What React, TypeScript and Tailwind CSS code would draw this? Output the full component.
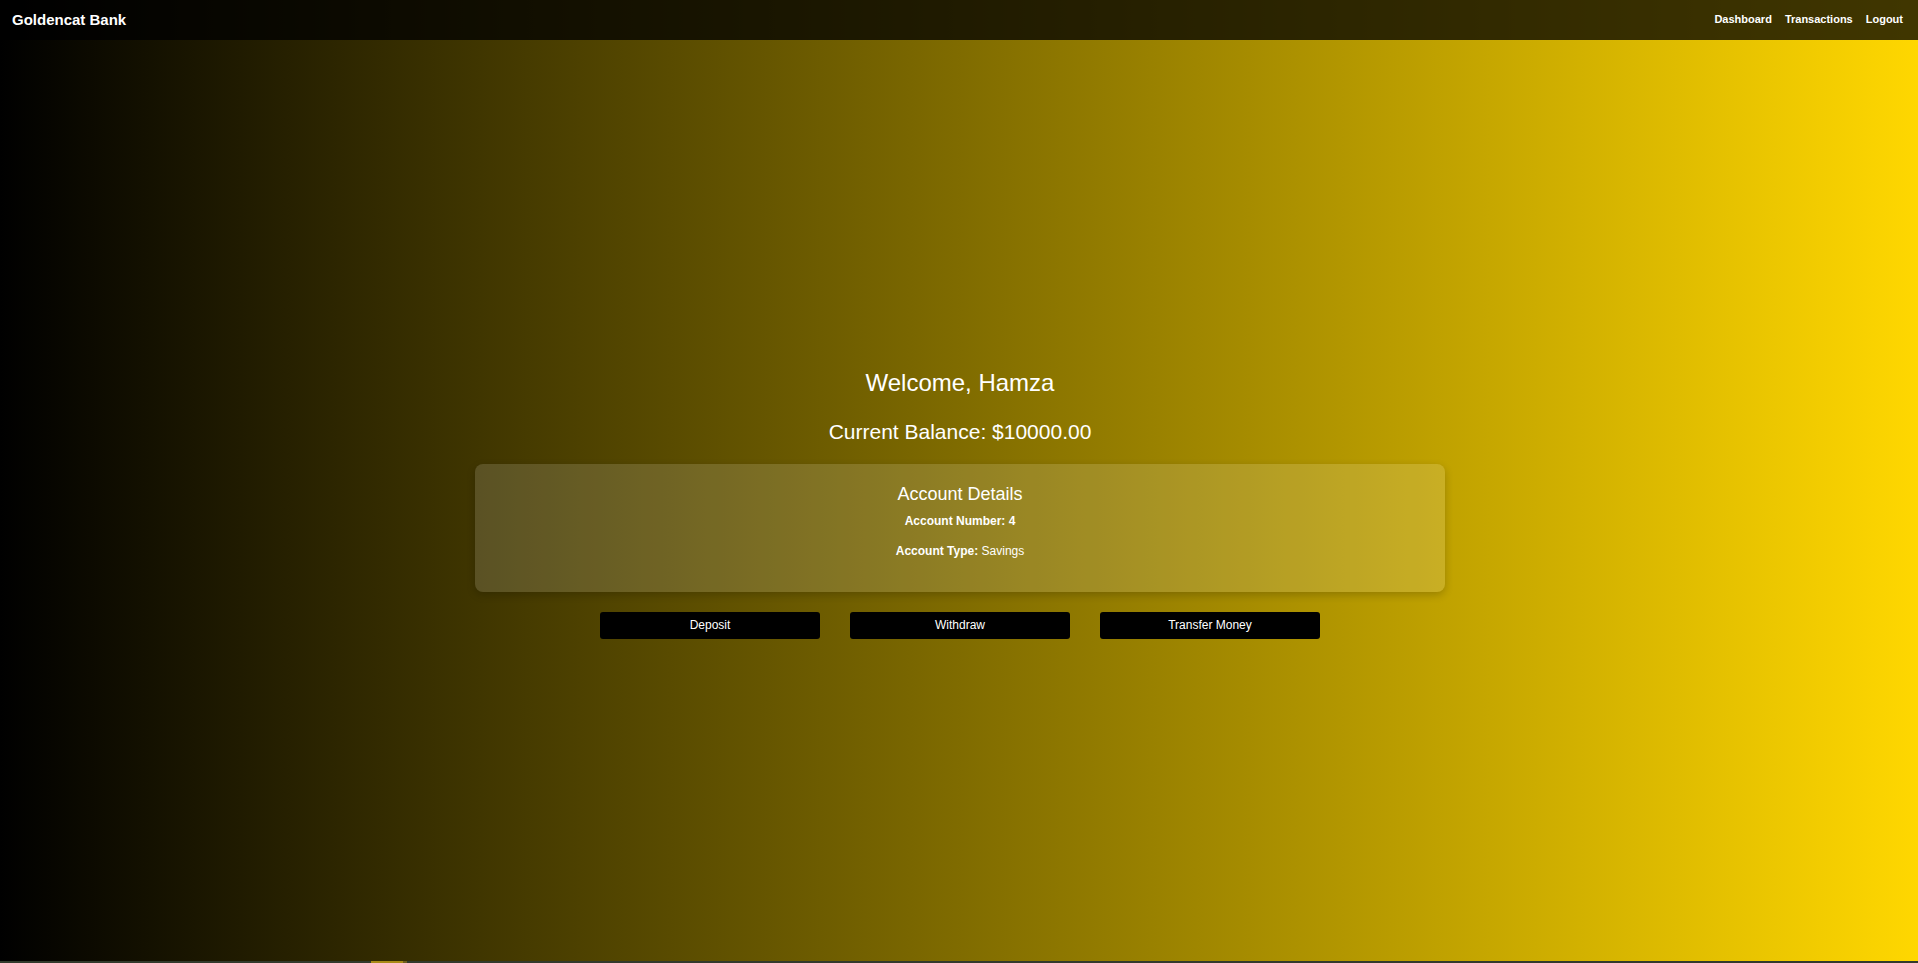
import React from "react";

export default function App() {
  return (
    <div
      className="flex h-screen w-full flex-col bg-[linear-gradient(to_right,#000000,#ffd700)] text-white"
      style={{ fontFamily: '"Liberation Sans", Arial, sans-serif' }}
    >
      <header className="flex h-10 shrink-0 items-center justify-between bg-black/75 pb-[2px] pl-3 pr-[15px]">
        <div className="text-[15px] font-bold leading-none">Goldencat Bank</div>
        <nav className="flex items-center gap-[13px] text-[11px] font-bold">
          <a href="#" className="text-white">Dashboard</a>
          <a href="#" className="text-white">Transactions</a>
          <a href="#" className="text-white">Logout</a>
        </nav>
      </header>

      <main className="flex flex-1 flex-col items-center justify-center pl-[2px] pt-[6px]">
        <h1 className="text-[24px] leading-[28px] font-normal">Welcome, Hamza</h1>
        <h2 className="mt-[23px] text-[21px] leading-[24px] font-normal">
          Current Balance: $10000.00
        </h2>

        <section className="mt-[20px] flex h-[128px] w-[970px] flex-col items-center rounded-lg bg-white/[0.14] pt-[19px] shadow-[0_3px_8px_rgba(0,0,0,0.2)]">
          <h3 className="text-[18px] leading-[22px] font-normal">Account Details</h3>
          <p className="mt-[8px] text-[12px] leading-[16px] font-bold">Account Number: 4</p>
          <p className="mt-[14px] text-[12px] leading-[16px]">
            <span className="font-bold">Account Type:</span> Savings
          </p>
        </section>

        <div className="mt-[20px] flex gap-[30px]">
          <button className="h-[27px] w-[220px] rounded-[3px] bg-black text-[12px] text-white">
            Deposit
          </button>
          <button className="h-[27px] w-[220px] rounded-[3px] bg-black text-[12px] text-white">
            Withdraw
          </button>
          <button className="h-[27px] w-[220px] rounded-[3px] bg-black text-[12px] text-white">
            Transfer Money
          </button>
        </div>
      </main>

      <div className="flex h-[2px] shrink-0 bg-[#323a2c]">
        <div className="w-[371px]" />
        <div className="w-[32px] bg-[#a88a16]" />
        <div className="w-[4px] bg-[#6e5f1c]" />
      </div>
    </div>
  );
}
